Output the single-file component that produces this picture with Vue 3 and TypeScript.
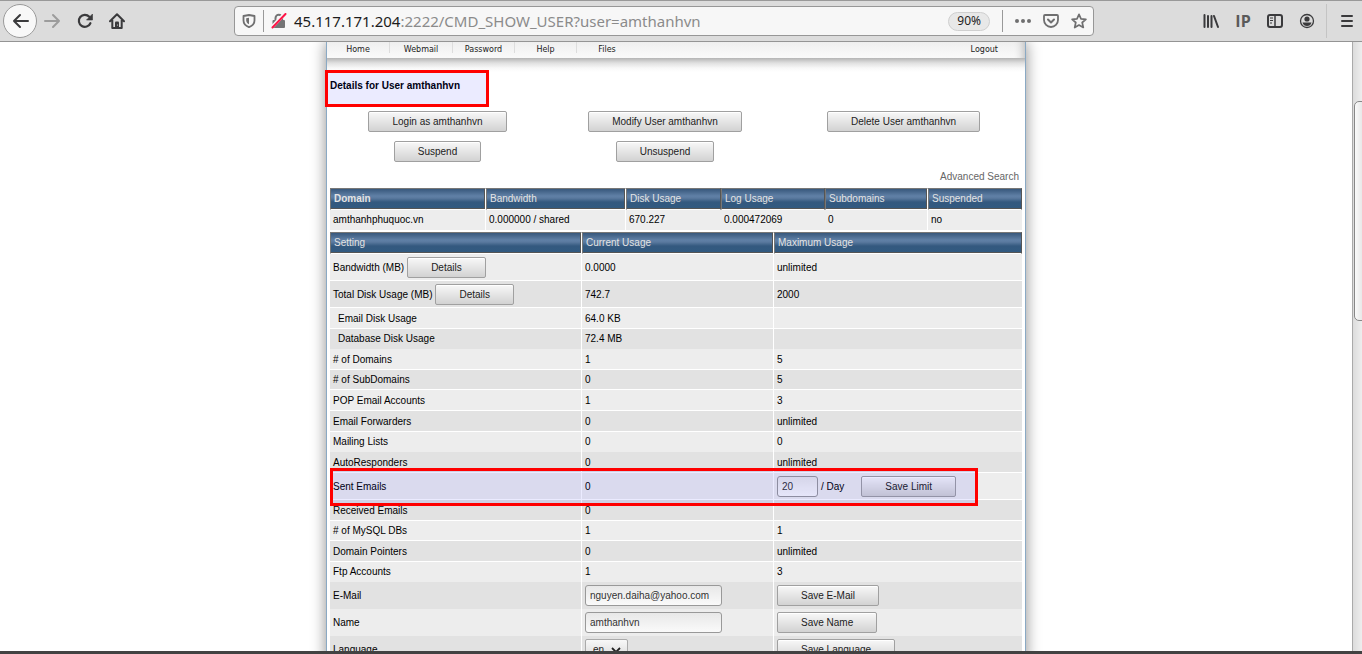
<script setup lang="ts">
import { ref } from 'vue'

interface Setting {
  name: string
  used: string
  max: string
  size?: 'tall' | 'short' | 'joined'
  kind?: 'details' | 'sub' | 'limit'
}

const menu = ['Home', 'Webmail', 'Password', 'Help', 'Files']

const actions = [
  'Login as amthanhvn',
  'Modify User amthanhvn',
  'Delete User amthanhvn',
  'Suspend',
  'Unsuspend',
]

const settings: Setting[] = [
  { name: 'Bandwidth (MB)', used: '0.0000', max: 'unlimited', size: 'tall', kind: 'details' },
  { name: 'Total Disk Usage (MB)', used: '742.7', max: '2000', size: 'tall', kind: 'details' },
  { name: 'Email Disk Usage', used: '64.0 KB', max: '', kind: 'sub' },
  { name: 'Database Disk Usage', used: '72.4 MB', max: '', size: 'joined', kind: 'sub' },
  { name: '# of Domains', used: '1', max: '5' },
  { name: '# of SubDomains', used: '0', max: '5', size: 'short' },
  { name: 'POP Email Accounts', used: '1', max: '3' },
  { name: 'Email Forwarders', used: '0', max: 'unlimited' },
  { name: 'Mailing Lists', used: '0', max: '0', size: 'joined' },
  { name: 'AutoResponders', used: '0', max: 'unlimited' },
  { name: 'Sent Emails', used: '0', max: '', size: 'tall', kind: 'limit' },
  { name: 'Received Emails', used: '0', max: '' },
  { name: '# of MySQL DBs', used: '1', max: '1', size: 'short' },
  { name: 'Domain Pointers', used: '0', max: 'unlimited' },
  { name: 'Ftp Accounts', used: '1', max: '3', size: 'joined' },
]

const email = ref('nguyen.daiha@yahoo.com')
const userName = ref('amthanhvn')
const limit = ref('20')
const language = ref('en')
</script>

<template>
  <div class="browser">
    <header class="toolbar">
      <button class="tool back" aria-label="Back">
        <svg width="18" height="16" viewBox="0 0 18 16"><path d="M9 2 3 8l6 6M3 8h14" fill="none" stroke="#3a3a3c" stroke-width="2" stroke-linecap="round" stroke-linejoin="round" /></svg>
      </button>
      <button class="tool" aria-label="Forward">
        <svg width="18" height="16" viewBox="0 0 18 16"><path d="m9 2 6 6-6 6M15 8H1" fill="none" stroke="#9c9c9c" stroke-width="2" stroke-linecap="round" stroke-linejoin="round" /></svg>
      </button>
      <button class="tool" aria-label="Reload">
        <svg width="16" height="16" viewBox="0 0 16 16"><path d="M13.4 10.2A6 6 0 1 1 12.3 3.800" fill="none" stroke="#3a3a3c" stroke-width="2.200" stroke-linecap="round" /><path d="M15.500 1v6h-6z" fill="#3a3a3c" stroke="#3a3a3c" stroke-width=".6" stroke-linejoin="round" /></svg>
      </button>
      <button class="tool" aria-label="Home page">
        <svg width="16" height="16" viewBox="0 0 16 16"><path d="M1 8.200 8 1.300l7 6.900M3.300 7v8h9.400V7" fill="none" stroke="#3a3a3c" stroke-width="2" stroke-linecap="round" stroke-linejoin="round" /><path d="M6 15V9.500Q6 8.500 7 8.500h2q1 0 1 1V15z" fill="#3a3a3c" /><circle cx="8.500" cy="12" r=".6" fill="#ddd" /></svg>
      </button>

      <div class="address">
        <svg class="shield" width="14" height="14" viewBox="0 0 14 14"><path d="M7 1 12.500 2v4.500C12.500 10 10 12 7 13.200 4 12 1.500 10 1.500 6.500V2z" fill="none" stroke="#6f6f70" stroke-width="1.800" stroke-linejoin="round" /><path d="M7 3.800v6.400C5 9.300 4.200 8 4.200 6.300V4.300z" fill="#6f6f70" /></svg>
        <span class="rule"></span>
        <svg class="lock" width="16" height="16" viewBox="0 0 16 16"><path d="M4.500 8V5a3.300 3.300 0 0 1 6.600 0v3" fill="none" stroke="#747475" stroke-width="2" /><rect x="1.500" y="7" width="12.500" height="8" rx="1" fill="#747475" /><path d="M1.500 13.500 13.500 1" stroke="#f7f7f7" stroke-width="3.600" /><path d="M1.500 14.500 14.500 1" stroke="#ff1547" stroke-width="2" stroke-linecap="round" /></svg>
        <span class="url"><b>45.117.171.204</b>:2222/CMD_SHOW_USER?user=amthanhvn</span>
        <button class="zoom">90%</button>
        <span class="rule"></span>
        <button class="icon" aria-label="Page actions">
          <svg width="16" height="16" viewBox="0 0 16 16" fill="#6f6f70"><circle cx="2" cy="8" r="2" /><circle cx="8" cy="8" r="2" /><circle cx="14" cy="8" r="2" /></svg>
        </button>
        <button class="icon" aria-label="Save to Pocket">
          <svg width="16" height="16" viewBox="0 0 16 16" fill="none" stroke="#6f6f70" stroke-width="1.800" stroke-linecap="round" stroke-linejoin="round"><path d="M2 2h12q1 0 1 1v4a7 7 0 0 1-14 0V3q0-1 1-1z" /><path d="m5 6.500 3 3 3-3" stroke-width="2" /></svg>
        </button>
        <button class="icon" aria-label="Bookmark">
          <svg width="16" height="16" viewBox="0 0 16 16"><path d="m8 1.300 2 4.500 4.900.5-3.700 3.200 1.100 5L8 12l-4.300 2.500 1.100-5-3.700-3.200 4.900-.5z" fill="none" stroke="#6f6f70" stroke-width="1.700" stroke-linejoin="round" /></svg>
        </button>
      </div>

      <div class="extras">
        <button class="icon" aria-label="Library">
          <svg width="16" height="16" viewBox="0 0 16 16" stroke="#3a3a3c" stroke-width="2" stroke-linecap="round"><path d="M1.500 2v12M5 3v11M8.500 3v11M11 3l4 11" /></svg>
        </button>
        <button class="ip">IP</button>
        <button class="icon" aria-label="Sidebar">
          <svg width="16" height="16" viewBox="0 0 16 16" fill="none" stroke="#3a3a3c"><rect x="1" y="2" width="14" height="12" rx="2" stroke-width="2" /><path d="M8 2v12" stroke-width="1.500" /><path d="M3 5h3M3 7.500h3M3 10h2" /></svg>
        </button>
        <button class="icon" aria-label="Account">
          <svg width="16" height="16" viewBox="0 0 16 16"><circle cx="8" cy="8" r="6.500" fill="none" stroke="#3a3a3c" stroke-width="1.300" /><circle cx="8" cy="6" r="2.600" fill="#3a3a3c" /><path d="M3.500 9.500h9q-1 3.500-4.500 3.500T3.500 9.500z" fill="#3a3a3c" /></svg>
        </button>
        <span class="divider"></span>
        <button class="icon" aria-label="Open menu">
          <svg width="14" height="14" viewBox="0 0 14 14" stroke="#3a3a3c" stroke-width="2" stroke-linecap="round"><path d="M2 2h10M2 7h10M2 12h10" /></svg>
        </button>
      </div>
    </header>

    <div class="viewport">
      <div class="page">
        <main class="panel">
          <nav class="menu">
            <a v-for="item in menu" :key="item" href="#">{{ item }}</a>
            <a class="logout" href="#">Logout</a>
          </nav>

          <div class="content">
            <h1>Details for User amthanhvn<span class="mark title-mark"></span></h1>

            <div class="actions">
              <button v-for="label in actions" :key="label" class="btn">{{ label }}</button>
            </div>

            <a class="advanced" href="#">Advanced Search</a>

            <table class="list domains">
              <colgroup>
                <col class="d1" /><col class="d2" /><col class="d3" /><col class="d4" /><col class="d5" /><col class="d6" />
              </colgroup>
              <thead>
                <tr>
                  <th class="split"><b>Domain</b></th>
                  <th class="split">Bandwidth</th>
                  <th>Disk Usage</th>
                  <th>Log Usage</th>
                  <th class="split">Subdomains</th>
                  <th>Suspended</th>
                </tr>
              </thead>
              <tbody>
                <tr class="joined">
                  <td class="split">amthanhphuquoc.vn</td>
                  <td class="split">0.000000 / shared</td>
                  <td>670.227</td>
                  <td>0.000472069</td>
                  <td class="split">0</td>
                  <td>no</td>
                </tr>
              </tbody>
            </table>

            <table class="list settings">
              <colgroup><col class="s1" /><col class="s2" /><col class="s3" /></colgroup>
              <thead>
                <tr>
                  <th class="split">Setting</th>
                  <th class="split">Current Usage</th>
                  <th>Maximum Usage</th>
                </tr>
              </thead>
              <tbody>
                <tr v-for="row in settings" :key="row.name" :class="[row.size, row.kind]">
                  <td class="split">
                    <div v-if="row.kind === 'details'" class="line">
                      {{ row.name }}<button class="btn">Details</button>
                    </div>
                    <template v-else>{{ row.name }}</template>
                    <span v-if="row.kind === 'limit'" class="mark"></span>
                  </td>
                  <td class="split">{{ row.used }}</td>
                  <td>
                    <div v-if="row.kind === 'limit'" class="line">
                      <input id="limit" v-model="limit" class="field small" type="text" />
                      <label for="limit">/ Day</label>
                      <button class="btn save-limit">Save Limit</button>
                    </div>
                    <template v-else>{{ row.max }}</template>
                  </td>
                </tr>
                <tr class="tall joined">
                  <td class="split"><label for="email">E-Mail</label></td>
                  <td class="split"><input id="email" v-model="email" class="field" type="text" /></td>
                  <td><button class="btn">Save E-Mail</button></td>
                </tr>
                <tr class="tall joined">
                  <td class="split"><label for="name">Name</label></td>
                  <td class="split"><input id="name" v-model="userName" class="field" type="text" /></td>
                  <td><button class="btn">Save Name</button></td>
                </tr>
                <tr class="tall joined">
                  <td class="split"><label for="language">Language</label></td>
                  <td class="split">
                    <div class="picker">
                      <select id="language" v-model="language"><option>en</option></select>
                      <svg width="10" height="6" viewBox="0 0 10 6"><path d="m1 1 4 4 4-4" fill="none" stroke="#222" stroke-width="1.800" /></svg>
                    </div>
                  </td>
                  <td><button class="btn">Save Language</button></td>
                </tr>
              </tbody>
            </table>
          </div>
        </main>
      </div>
      <div class="scrollbar"><div class="thumb"></div></div>
    </div>
    <footer class="taskbar"></footer>
  </div>
</template>

<style>
body {
  margin: 0;
}
</style>

<style scoped>
.browser {
  display: flex;
  flex-direction: column;
  height: 100vh;
  overflow: hidden;
  background: #fff;
  font: 10px/12px "Liberation Sans", Arial, sans-serif;
  color: #000;
}

button {
  font: inherit;
  cursor: pointer;
}

/* Browser toolbar */
.toolbar {
  box-sizing: border-box;
  flex: none;
  display: flex;
  align-items: center;
  height: 42px;
  padding: 0 8px 0 3px;
  border-top: 1px solid #999;
  border-bottom: 1px solid #949494;
  background: #dcdcdc;
}

.tool,
.icon,
.ip {
  display: grid;
  place-items: center;
  flex: none;
  padding: 0;
  border: 0;
  background: none;
}

.tool {
  width: 32px;
  height: 34px;
}

.tool.back {
  box-sizing: border-box;
  width: 34px;
  border: 1px solid #9a9a9a;
  border-radius: 50%;
  background: #f8f8f8;
}

.address {
  box-sizing: border-box;
  flex: 1;
  display: flex;
  align-items: center;
  height: 30px;
  margin-left: 101px;
  padding: 0 6px 0 7px;
  border: 1px solid #979797;
  border-radius: 4px;
  background: #f7f7f7;
}

.rule {
  width: 1px;
  height: 22px;
  background: #999;
}

.shield {
  margin-right: 7px;
}

.lock {
  margin: 0 7px 0 7px;
}

.url {
  flex: 1;
  font: 15px/20px "Noto Sans", "Open Sans", sans-serif;
  color: #8b8b8b;
  white-space: nowrap;
}

.url b {
  font-weight: 400;
  color: #1c1c1c;
}

.zoom {
  box-sizing: border-box;
  height: 19px;
  margin-right: 12px;
  padding: 0 8px;
  border: 1px solid #cfcfcf;
  border-radius: 10px;
  background: #e8e8e8;
  font: 12px/16px "Noto Sans", "Open Sans", sans-serif;
  color: #222;
}

.address .icon {
  width: 16px;
  margin-left: 12px;
}

.extras {
  display: flex;
  align-items: center;
  gap: 16px;
  margin-left: 109px;
}

.ip {
  width: 16px;
  font: 700 16px/18px "Liberation Sans Narrow", "Open Sans", sans-serif;
  color: #5a5a5a;
}

.divider {
  width: 1px;
  height: 34px;
  margin-left: -5px;
  background: #c4c4c4;
}

.extras .icon:last-child {
  margin-left: -3px;
}

/* Page area */
.viewport {
  flex: 1;
  display: flex;
  min-height: 0;
}

.page {
  flex: 1;
  overflow: hidden;
}

.scrollbar {
  box-sizing: border-box;
  flex: none;
  width: 10px;
  padding: 59px 0 0 1px;
  overflow: hidden;
  border-left: 1px solid #aaa;
  background: linear-gradient(90deg, #dcdcdc, #eee);
}

.thumb {
  box-sizing: border-box;
  width: 14px;
  height: 220px;
  border: 1px solid #888;
  border-radius: 5px;
  background: linear-gradient(90deg, #fafafa, #dcdcdc);
}

.panel {
  box-sizing: border-box;
  width: 700px;
  min-height: 100%;
  margin: 0 auto;
  border: solid #8aa9c4;
  border-width: 0 1px;
  background: #fff;
  box-shadow: 0 0 14px rgba(0, 0, 0, 0.45);
}

.menu {
  display: grid;
  grid-template-columns: 63px 63px 62px 62px 60px 1fr;
  height: 16px;
  background: linear-gradient(#efefef, #fafafa);
  font: 8px/16px "DejaVu Sans", Verdana, sans-serif;
  box-shadow: inset -10px 0 8px -8px #bbb;
}

.menu a {
  color: #222;
  text-align: center;
  text-decoration: none;
}

.menu a:nth-child(-n + 4) {
  height: 11px;
  border-right: 1px solid #ddd;
}

.menu .logout {
  padding-right: 27px;
  text-align: right;
}

.content {
  display: flex;
  flex-direction: column;
  padding: 22px 3px 0;
  background: linear-gradient(#b4b4b4, #e0e0e0 5px, #f8f8f8 10px, #fff 14px) no-repeat top / 100% 14px;
}

h1 {
  position: relative;
  margin: 0;
  font-size: 10px;
  line-height: 12px;
}

.mark {
  position: absolute;
  z-index: 1;
  inset: -5px 44px -6px 0;
  border: 3px solid #f00;
  background: rgba(0, 0, 255, 0.08);
  pointer-events: none;
}

.title-mark {
  inset: -10px auto -15px -5px;
  width: 158px;
}

.actions {
  display: grid;
  grid-template-columns: 215fr 240fr 237fr;
  justify-items: center;
  row-gap: 9px;
  margin-top: 19px;
}

.btn {
  box-sizing: border-box;
  height: 21px;
  padding: 0 23px;
  border: 1px solid #a0a0a0;
  border-radius: 2px;
  background: linear-gradient(#f8f8f8, #d2d2d2);
  box-shadow: inset 0 1px #fff;
  line-height: 19px;
  color: #222;
  white-space: nowrap;
}

.advanced {
  align-self: flex-end;
  margin: 9px 3px 5px 0;
  color: #666;
  text-decoration: none;
}

/* Tables */
.list {
  width: 100%;
  table-layout: fixed;
  border-spacing: 0;
}

.d1 { width: 156px; }
.d2 { width: 140px; }
.d3 { width: 95px; }
.d4 { width: 104px; }
.d5 { width: 103px; }
.d6 { width: 94px; }
.s1 { width: 252px; }
.s2 { width: 192px; }
.s3 { width: 248px; }

.domains {
  margin-bottom: 2px;
}

th {
  box-sizing: border-box;
  height: 22px;
  padding: 0 3px;
  border: 1px solid #555;
  border-top-color: #777;
  border-left-color: #777;
  border-bottom-color: #fff;
  background: linear-gradient(#38587c, #6080a6 35%, #5b7a9f 45%, #34597f 65%, #315a80);
  background-clip: padding-box;
  box-shadow: inset 0 -1px #555;
  font-weight: 400;
  text-align: left;
  color: #e4e4e4;
}

td {
  box-sizing: border-box;
  height: 21px;
  padding: 2px 3px 0;
  border-bottom: 1px solid #fff;
  background: #ededed;
}

.split {
  border-right: 1px solid #fff;
}

th.split {
  box-shadow: inset -1px -1px #555;
}

.settings tbody tr:nth-child(even) td {
  background: #e2e2e2;
}

.limit {
  position: relative;
  z-index: 1;
}

.short td {
  height: 20px;
  padding-top: 0;
}

.joined td {
  height: 20px;
  padding-top: 0;
  border-bottom: 0;
}

.tall td {
  height: 27px;
}

.sub td:first-child {
  padding-left: 8px;
}

.line {
  display: flex;
  align-items: baseline;
  gap: 3px;
  margin-top: -2px;
}

.field {
  box-sizing: border-box;
  display: block;
  width: 137px;
  height: 21px;
  padding: 0 4px;
  border: 1px solid #999;
  border-radius: 3px;
  background: linear-gradient(#e8e8e8, #fafafa);
  font: inherit;
  color: #333;
}

.field.small {
  width: 41px;
}

.save-limit {
  margin-left: 14px;
}

.list td > .btn {
  display: block;
}

.picker {
  position: relative;
  width: 43px;
}

.picker select {
  box-sizing: border-box;
  display: block;
  width: 100%;
  height: 21px;
  padding: 0 7px;
  border: 1px solid #aaa;
  border-radius: 2px;
  background: linear-gradient(#f8f8f8, #d8d8d8);
  appearance: none;
  font: inherit;
  color: #222;
}

.picker svg {
  position: absolute;
  top: 8px;
  right: 7px;
  pointer-events: none;
}

.taskbar {
  flex: none;
  height: 3px;
  background: #424242;
}
</style>
